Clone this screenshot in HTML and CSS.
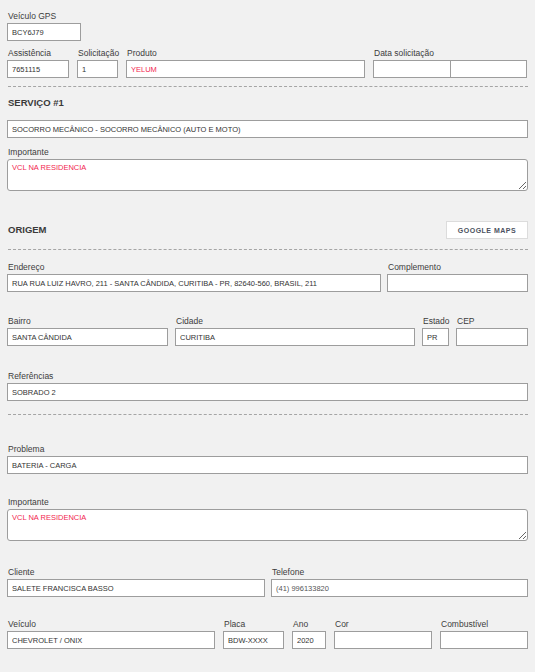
FILE: index.html
```html
<!DOCTYPE html>
<html lang="pt-BR">
<head>
    <meta charset="UTF-8">
    <meta name="viewport" content="width=device-width, initial-scale=1.0">
    <title>Atendimento</title>
    <link rel="stylesheet" href="styles.css">
</head>
<body>
    <div class="form">
        <div class="row row-gps">
            <div class="field">
                <label>Veículo GPS</label>
                <input type="text" value="BCY6J79">
            </div>
        </div>

        <div class="row row-request">
            <div class="field">
                <label>Assistência</label>
                <input type="text" value="7651115">
            </div>
            <div class="field">
                <label>Solicitação</label>
                <input type="text" value="1">
            </div>
            <div class="field">
                <label>Produto</label>
                <input type="text" class="alert" value="YELUM">
            </div>
            <div class="field">
                <label>Data solicitação</label>
                <div class="pair">
                    <input type="text" value="">
                    <input type="text" value="">
                </div>
            </div>
        </div>

        <hr class="sep sep-first">

        <h2 class="section-title">SERVIÇO #1</h2>
        <input type="text" class="service" value="SOCORRO MECÂNICO - SOCORRO MECÂNICO (AUTO E MOTO)">

        <div class="field note-first">
            <label>Importante</label>
            <textarea class="alert">VCL NA RESIDENCIA</textarea>
        </div>

        <div class="section-head">
            <h2 class="section-title">ORIGEM</h2>
            <button type="button" class="btn-maps">Google Maps</button>
        </div>

        <hr class="sep sep-origin">

        <div class="row row-address">
            <div class="field">
                <label>Endereço</label>
                <input type="text" value="RUA RUA LUIZ HAVRO, 211 - SANTA CÂNDIDA, CURITIBA - PR, 82640-560, BRASIL, 211">
            </div>
            <div class="field">
                <label>Complemento</label>
                <input type="text" value="">
            </div>
        </div>

        <div class="row row-city">
            <div class="field">
                <label>Bairro</label>
                <input type="text" value="SANTA CÂNDIDA">
            </div>
            <div class="field">
                <label>Cidade</label>
                <input type="text" value="CURITIBA">
            </div>
            <div class="field">
                <label>Estado</label>
                <input type="text" value="PR">
            </div>
            <div class="field">
                <label>CEP</label>
                <input type="text" value="">
            </div>
        </div>

        <div class="row row-ref">
            <div class="field">
                <label>Referências</label>
                <input type="text" value="SOBRADO 2">
            </div>
        </div>

        <hr class="sep sep-ref">

        <div class="row row-problem">
            <div class="field">
                <label>Problema</label>
                <input type="text" value="BATERIA - CARGA">
            </div>
        </div>

        <div class="field note-second">
            <label>Importante</label>
            <textarea class="alert">VCL NA RESIDENCIA</textarea>
        </div>

        <div class="row row-client">
            <div class="field">
                <label>Cliente</label>
                <input type="text" value="SALETE FRANCISCA BASSO">
            </div>
            <div class="field">
                <label>Telefone</label>
                <input type="text" class="phone" value="(41) 996133820">
            </div>
        </div>

        <div class="row row-vehicle">
            <div class="field">
                <label>Veículo</label>
                <input type="text" value="CHEVROLET / ONIX">
            </div>
            <div class="field">
                <label>Placa</label>
                <input type="text" value="BDW-XXXX">
            </div>
            <div class="field">
                <label>Ano</label>
                <input type="text" value="2020">
            </div>
            <div class="field">
                <label>Cor</label>
                <input type="text" value="">
            </div>
            <div class="field">
                <label>Combustível</label>
                <input type="text" value="">
            </div>
        </div>
    </div>
</body>
</html>
```

FILE: styles.css
```css
*{
    margin: 0;
    padding: 0;
    box-sizing: border-box;
}

:root{
    --background: #f1f1f1;
    --border: #9d9d9d;
    --text: #333;
    --label: #3c3c3c;
    --alert: #f2264f;
}

body{
    background-color: var(--background);
    color: var(--text);
    font-family: "Liberation Sans", Arial, sans-serif;
}

.form{
    padding: 10px 7px 20px 7px;
}

.row{
    display: grid;
    gap: 8px;
}

.field{
    display: flex;
    flex-direction: column;
    min-width: 0;
}

label{
    display: block;
    height: 13px;
    line-height: 13px;
    font-size: 8.5px;
    color: var(--label);
    padding-left: 1px;
    white-space: nowrap;
}

input, textarea{
    width: 100%;
    height: 18px;
    background-color: #fff;
    border: 1px solid var(--border);
    border-radius: 0;
    outline: none;
    padding: 0 4px;
    font-family: "Liberation Sans", Arial, sans-serif;
    font-size: 7.5px;
    color: var(--text);
}

textarea{
    display: block;
    height: 32px;
    padding: 3px 4px;
    border-radius: 3px;
    line-height: 10px;
}

.alert{
    color: var(--alert);
}

.phone{
    color: #555;
}

.pair{
    display: flex;
}

.pair input{
    width: 50%;
}

.pair input + input{
    margin-left: -1px;
}

/* rows */
.row-gps{
    grid-template-columns: 74px;
}

.row-request{
    margin-top: 6px;
    grid-template-columns: 62px 41px 1fr 155px;
}

.row-address{
    margin-top: 11px;
    gap: 6px;
    grid-template-columns: 1fr 141px;
}

.row-city{
    margin-top: 23px;
    gap: 7px;
    grid-template-columns: 161px 1fr 27px 72px;
}

.row-ref{
    margin-top: 24px;
    grid-template-columns: 1fr;
}

.row-problem{
    margin-top: 28px;
    grid-template-columns: 1fr;
}

.row-client{
    margin-top: 25px;
    gap: 6px;
    grid-template-columns: 258px 1fr;
}

.row-vehicle{
    margin-top: 21px;
    grid-template-columns: 208px 61px 34px 98px 1fr;
}

/* separators */
.sep{
    border: none;
    border-top: 1px dashed #a5a5a5;
    margin: 0 0 0 1px;
}

.sep-first{
    margin-top: 8px;
}

.sep-origin{
    margin-top: 10px;
}

.sep-ref{
    margin-top: 13px;
}

/* sections */
.section-title{
    font-size: 9.5px;
    font-weight: bold;
    line-height: 14px;
    color: #3a3a3a;
    padding-left: 1px;
}

.sep-first + .section-title{
    margin-top: 9px;
}

.service{
    display: block;
    margin-top: 10px;
}

.note-first{
    margin-top: 8px;
}

.note-second{
    margin-top: 22px;
}

.section-head{
    margin-top: 30px;
    display: flex;
    justify-content: space-between;
    align-items: center;
}

.btn-maps{
    width: 82px;
    height: 18px;
    background-color: #fff;
    border: 1px solid #dcdcdc;
    font-family: "Liberation Sans", Arial, sans-serif;
    font-size: 7px;
    font-weight: bold;
    letter-spacing: 0.5px;
    text-transform: uppercase;
    color: #4c5261;
    cursor: pointer;
}
```
